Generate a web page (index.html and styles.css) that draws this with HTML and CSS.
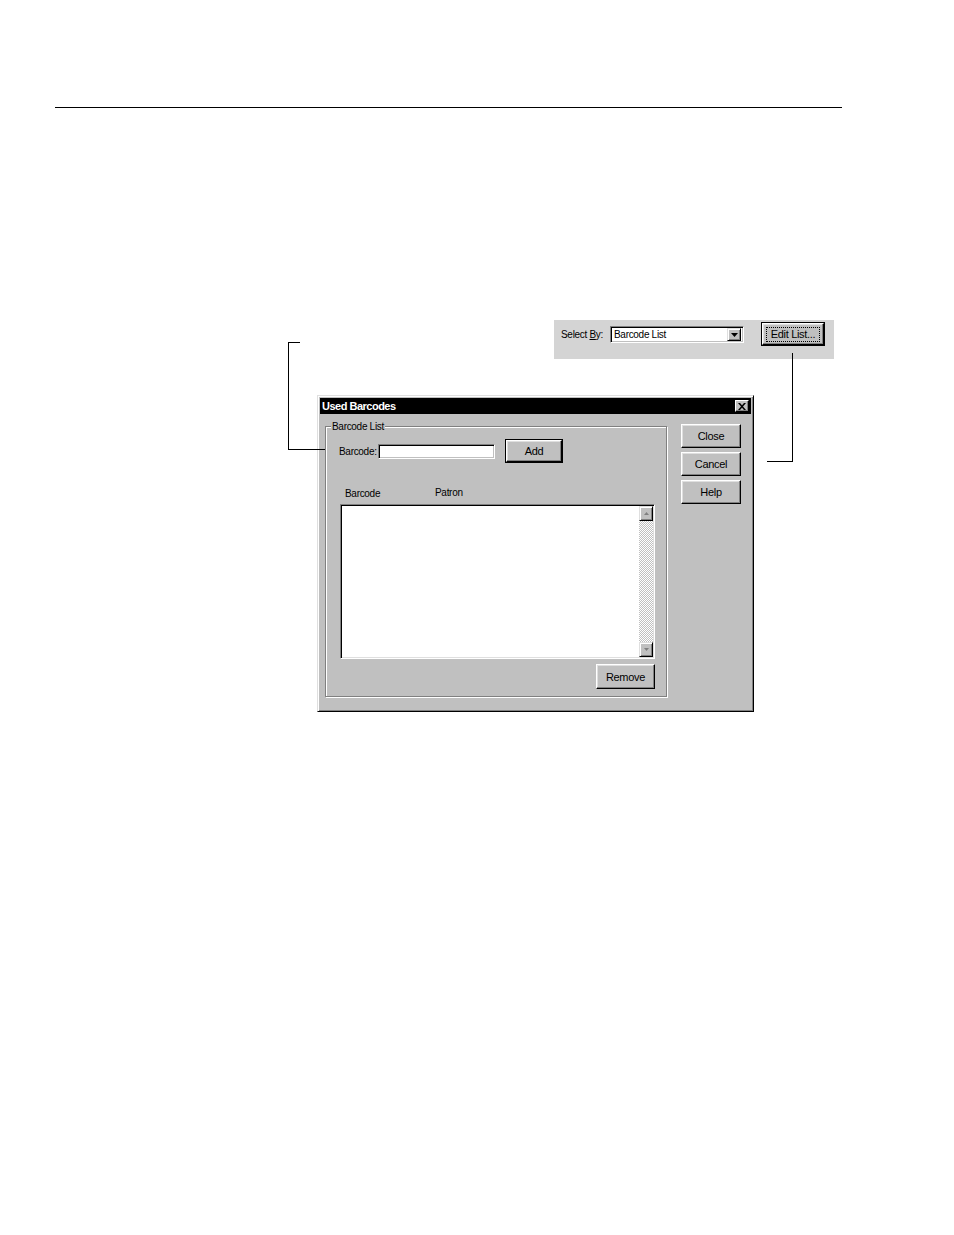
FILE: index.html
```html
<!DOCTYPE html>
<html>
<head>
<meta charset="utf-8">
<link rel="stylesheet" href="styles.css">
</head>
<body>
<div class="page">
  <div class="rule"></div>

  <div class="panel">
    <span class="lbl sel-lbl">Select <u>B</u>y:</span>
    <div class="combo">
      <span class="combo-text">Barcode List</span>
      <span class="combo-btn"><svg width="7" height="4" viewBox="0 0 7 4"><path d="M0 0h7L3.5 4z" fill="#000"/></svg></span>
    </div>
    <div class="defbtn edit-btn"><div class="btn inner"><span class="focus">Edit List...</span></div></div>
  </div>

  <div class="dialog">
    <div class="titlebar">
      <span class="title">Used Barcodes</span>
      <span class="xbtn"><svg width="8" height="7" viewBox="0 0 8 7"><path d="M0 0h2l2 2.2L6 0h2L5 3.5 8 7H6L4 4.8 2 7H0l3-3.5z" fill="#000"/></svg></span>
    </div>
    <div class="dbody">
      <div class="group">
        <span class="legend">Barcode List</span>
        <div class="row">
          <span class="lbl bc-lbl">Barcode:</span>
          <div class="input"></div>
          <div class="defbtn add-btn"><div class="btn inner">Add</div></div>
        </div>
        <div class="heads">
          <span class="h1">Barcode</span>
          <span class="h2">Patron</span>
        </div>
        <div class="list">
          <div class="list-area"></div>
          <div class="vscroll">
            <span class="sbtn"><svg width="5" height="3" viewBox="0 0 5 3"><path d="M2.5 0L5 3H0z" fill="#808080"/></svg></span>
            <span class="track"></span>
            <span class="sbtn"><svg width="5" height="3" viewBox="0 0 5 3"><path d="M0 0h5L2.5 3z" fill="#808080"/></svg></span>
          </div>
        </div>
        <div class="remove-row">
          <div class="btn remove-btn">Remove</div>
        </div>
      </div>
      <div class="side">
        <div class="btn side-btn">Close</div>
        <div class="btn side-btn">Cancel</div>
        <div class="btn side-btn">Help</div>
      </div>
    </div>
  </div>

  <div class="line l1"></div>
  <div class="line l2"></div>
  <div class="line l3"></div>
  <div class="line r1"></div>
  <div class="line r2"></div>
</div>
</body>
</html>
```
FILE: styles.css
```css
html, body {
  margin: 0;
  padding: 0;
  background: #fff;
}
.page {
  position: relative;
  display: flow-root;
  width: 954px;
  height: 1235px;
  font-family: "Liberation Sans", Arial, sans-serif;
  font-size: 10px;
  letter-spacing: -0.3px;
  color: #000;
  white-space: nowrap;
}
.rule {
  margin-top: 107px;
  margin-left: 55px;
  width: 787px;
  height: 0;
  border-top: 1px solid #000;
}
.panel {
  margin-top: 212px;
  margin-left: 554px;
  width: 280px;
  height: 39px;
  background: #d4d4d4;
  box-sizing: border-box;
  padding: 2px 0 0 7px;
  display: flex;
  align-items: flex-start;
}
.sel-lbl {
  margin-top: 7px;
  width: 49px;
}
.sel-lbl u { text-decoration: underline; }
.combo {
  margin-top: 4px;
  width: 134px;
  height: 17px;
  box-sizing: border-box;
  background: #fff;
  border-top: 1px solid #808080;
  border-left: 1px solid #808080;
  border-right: 1px solid #fff;
  border-bottom: 1px solid #fff;
  box-shadow: inset 1px 1px 0 #000, inset -1px -1px 0 #c0c0c0;
  display: flex;
  align-items: center;
  padding: 2px 2px 2px 3px;
}
.combo-text { flex: 1; line-height: 11px; }
.combo-btn {
  width: 14px;
  height: 13px;
  box-sizing: border-box;
  background: #c0c0c0;
  border-top: 1px solid #dfdfdf;
  border-left: 1px solid #dfdfdf;
  border-right: 1px solid #000;
  border-bottom: 1px solid #000;
  box-shadow: inset 1px 1px 0 #fff, inset -1px -1px 0 #808080;
  display: flex;
  align-items: center;
  justify-content: center;
}
.btn {
  box-sizing: border-box;
  background: #c0c0c0;
  border-top: 1px solid #fff;
  border-left: 1px solid #fff;
  border-right: 1px solid #000;
  border-bottom: 1px solid #000;
  box-shadow: inset -1px -1px 0 #808080, inset 1px 1px 0 #dfdfdf;
  display: flex;
  align-items: center;
  justify-content: center;
  text-align: center;
}
.defbtn {
  box-sizing: border-box;
  border: 1px solid #000;
  display: flex;
}
.defbtn .inner { flex: 1; }
.edit-btn {
  margin-left: 17px;
  width: 64px;
  height: 24px;
  font-size: 11px;
}
.focus {
  display: flex;
  align-items: center;
  justify-content: center;
  width: 52px;
  height: 13px;
  outline: 1px dotted #000;
}
.dialog {
  margin-top: 36px;
  margin-left: 317px;
  width: 437px;
  height: 317px;
  box-sizing: border-box;
  background: #c0c0c0;
  border-top: 1px solid #dfdfdf;
  border-left: 1px solid #dfdfdf;
  border-right: 1px solid #000;
  border-bottom: 1px solid #000;
  box-shadow: inset 1px 1px 0 #fff, inset -1px -1px 0 #808080;
  padding: 2px;
}
.titlebar {
  height: 16px;
  background: #000;
  color: #fff;
  display: flex;
  align-items: center;
  padding: 0 2px 0 2px;
}
.title {
  flex: 1;
  font-weight: bold;
  font-size: 11px;
  letter-spacing: -0.5px;
}
.xbtn {
  width: 14px;
  height: 12px;
  box-sizing: border-box;
  background: #c0c0c0;
  border-top: 1px solid #fff;
  border-left: 1px solid #fff;
  border-right: 1px solid #000;
  border-bottom: 1px solid #000;
  box-shadow: inset -1px -1px 0 #808080;
  display: flex;
  align-items: center;
  justify-content: center;
}
.dbody {
  display: flex;
  padding: 8px 0 0 5px;
}
.group {
  position: relative;
  width: 342px;
  height: 271px;
  margin-top: 4px;
  box-sizing: border-box;
  border: 1px solid #808080;
  box-shadow: inset 1px 1px 0 #fff, 1px 1px 0 #fff;
  padding: 12px 0 0 13px;
}
.legend {
  position: absolute;
  top: -7px;
  left: 5px;
  padding: 0 1px;
  background: #c0c0c0;
  line-height: 13px;
}
.row {
  display: flex;
  align-items: center;
  height: 24px;
}
.bc-lbl { width: 39px; }
.input {
  width: 117px;
  height: 15px;
  box-sizing: border-box;
  background: #fff;
  border-top: 1px solid #808080;
  border-left: 1px solid #808080;
  border-right: 1px solid #fff;
  border-bottom: 1px solid #fff;
  box-shadow: inset 1px 1px 0 #000, inset -1px -1px 0 #c0c0c0;
}
.add-btn {
  margin-left: 10px;
  width: 58px;
  height: 24px;
  font-size: 11px;
}
.heads {
  height: 13px;
  margin-top: 23px;
  margin-bottom: 5px;
  display: flex;
  align-items: center;
}
.h1 { margin-left: 6px; width: 90px; margin-top: 2px; }
.list {
  margin-left: 1px;
  width: 315px;
  height: 155px;
  box-sizing: border-box;
  border-top: 1px solid #808080;
  border-left: 1px solid #808080;
  border-right: 1px solid #fff;
  border-bottom: 1px solid #fff;
  box-shadow: inset 1px 1px 0 #000, inset -1px -1px 0 #dfdfdf;
  background: #fff;
  padding: 1px 1px 1px 2px;
  display: flex;
}
.list-area { flex: 1; }
.vscroll {
  width: 14px;
  display: flex;
  flex-direction: column;
}
.sbtn {
  height: 15px;
  box-sizing: border-box;
  background: #c0c0c0;
  border-top: 1px solid #dfdfdf;
  border-left: 1px solid #dfdfdf;
  border-right: 1px solid #000;
  border-bottom: 1px solid #000;
  box-shadow: inset 1px 1px 0 #fff, inset -1px -1px 0 #808080;
  display: flex;
  align-items: center;
  justify-content: center;
}
.track {
  flex: 1;
  background-color: #fff;
  background-image:
    linear-gradient(45deg, #c0c0c0 25%, transparent 25%, transparent 75%, #c0c0c0 75%),
    linear-gradient(45deg, #c0c0c0 25%, transparent 25%, transparent 75%, #c0c0c0 75%);
  background-size: 2px 2px;
  background-position: 0 0, 1px 1px;
}
.remove-row {
  display: flex;
  justify-content: flex-end;
  width: 316px;
  margin-top: 5px;
}
.remove-btn {
  width: 59px;
  height: 25px;
  font-size: 11px;
}
.side {
  margin-top: 2px;
  margin-left: 14px;
  display: flex;
  flex-direction: column;
  gap: 4px;
}
.side-btn {
  width: 60px;
  height: 24px;
  font-size: 11px;
}
.line {
  position: absolute;
  background: #000;
}
.l1 { left: 288px; top: 342px; width: 1px; height: 108px; }
.l2 { left: 288px; top: 342px; width: 12px; height: 1px; }
.l3 { left: 288px; top: 449px; width: 37px; height: 1px; }
.r1 { left: 792px; top: 353px; width: 1px; height: 109px; }
.r2 { left: 767px; top: 461px; width: 26px; height: 1px; }
```
